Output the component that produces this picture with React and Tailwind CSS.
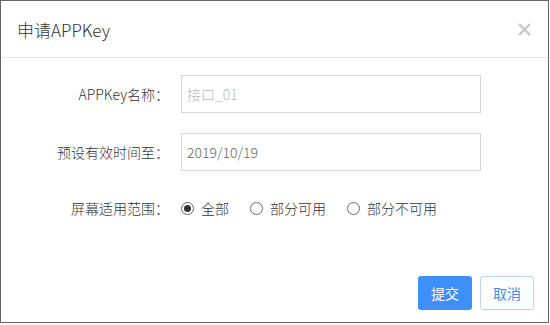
import React, { useState } from 'react';

const font = { fontFamily: '"Noto Sans CJK SC", "Noto Sans", sans-serif' };

function Radio({ label, checked, onClick }) {
  return (
    <label className="flex items-center cursor-pointer" onClick={onClick}>
      <span className="w-[13px] h-[13px] rounded-full border border-[#666] flex items-center justify-center">
        {checked && <span className="w-[7px] h-[7px] rounded-full bg-[#333]" />}
      </span>
      <span className="ml-[7px] text-[14px] text-[#333]">{label}</span>
    </label>
  );
}

export default function App() {
  const [scope, setScope] = useState('all');

  const scopes = [
    { value: 'all', label: '全部' },
    { value: 'part', label: '部分可用' },
    { value: 'none', label: '部分不可用' }
  ];

  return (
    <div className="w-[549px] h-[323px] border border-[#666] bg-white flex flex-col font-light" style={font}>
      {/* Header */}
      <div className="h-[57px] shrink-0 border-b border-[#e5e5e5] flex items-center justify-between pl-[16px] pr-[17px]">
        <span className="text-[17px] text-[#333] leading-none">申请APPKey</span>
        <svg width="13" height="13" viewBox="0 0 13 13">
          <path d="M1 1 L12 12 M12 1 L1 12" stroke="#c8c8c8" strokeWidth="2.4" />
        </svg>
      </div>

      {/* Form */}
      <div className="flex-1 pt-[17px]">
        <div className="flex items-center h-[38px]">
          <span className="w-[168px] text-right text-[14px] text-[#333]">APPKey名称：</span>
          <div className="ml-[12px] w-[300px] h-[38px] border border-[#d6d6d6] px-[5px] flex items-center text-[14px] text-[#bbb]">
            接口_01
          </div>
        </div>

        <div className="flex items-center h-[38px] mt-[20px]">
          <span className="w-[168px] text-right text-[14px] text-[#333]">预设有效时间至：</span>
          <div className="ml-[12px] w-[300px] h-[38px] border border-[#d6d6d6] px-[5px] flex items-center text-[14px] text-[#666]">
            2019/10/19
          </div>
        </div>

        <div className="flex items-center h-[34px] mt-[20px]">
          <span className="w-[168px] text-right text-[14px] text-[#333]">屏幕适用范围：</span>
          <div className="ml-[12px] flex items-center gap-[21px]">
            {scopes.map((s) => (
              <Radio key={s.value} label={s.label} checked={scope === s.value} onClick={() => setScope(s.value)} />
            ))}
          </div>
        </div>
      </div>

      {/* Footer */}
      <div className="flex justify-end gap-[8px] pr-[14px] pb-[12px]">
        <button className="w-[54px] h-[34px] rounded-[3px] bg-[#3f8ff8] text-white text-[14px] font-normal">提交</button>
        <button className="w-[54px] h-[34px] rounded-[3px] border border-[#b8d5fb] bg-white text-[#3f8ff8] text-[14px] font-normal">取消</button>
      </div>
    </div>
  );
}
